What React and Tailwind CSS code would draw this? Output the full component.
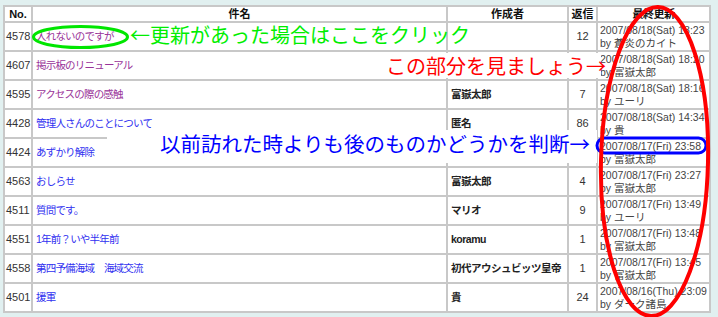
import React from "react";

const rows = [
  { no: "4578", title: "入れないのですが", v: true, author: "", reply: "12", date: "2007/08/18(Sat) 18:23", by: "蒼炎のカイト" },
  { no: "4607", title: "掲示板のリニューアル", v: true, author: "", reply: "", date: "2007/08/18(Sat) 18:20", by: "富嶽太郎" },
  { no: "4595", title: "アクセスの際の感触", v: true, author: "富嶽太郎", reply: "7", date: "2007/08/18(Sat) 18:16", by: "ユーリ" },
  { no: "4428", title: "管理人さんのことについて", v: false, author: "匿名", reply: "86", date: "2007/08/18(Sat) 14:34", by: "貴" },
  { no: "4424", title: "あずかり解除", v: false, author: "", reply: "", date: "2007/08/17(Fri) 23:58", by: "富嶽太郎" },
  { no: "4563", title: "おしらせ", v: false, author: "富嶽太郎", reply: "4", date: "2007/08/17(Fri) 23:27", by: "富嶽太郎" },
  { no: "4511", title: "質問です。", v: false, author: "マリオ", reply: "9", date: "2007/08/17(Fri) 13:49", by: "ユーリ" },
  { no: "4551", title: "1年前？いや半年前", v: false, author: "koramu", reply: "1", date: "2007/08/17(Fri) 13:48", by: "富嶽太郎" },
  { no: "4558", title: "第四予備海域　海域交流", v: false, author: "初代アウシュビッツ皇帝", reply: "1", date: "2007/08/17(Fri) 13:45", by: "富嶽太郎" },
  { no: "4501", title: "援軍", v: false, author: "貴", reply: "24", date: "2007/08/16(Thu) 23:09", by: "ダーク諸島" },
];

export default function App() {
  return (
    <div className="relative w-[718px] h-[317px] bg-[#e1f0f0] pt-[5px] pl-[3px] overflow-hidden font-['Liberation_Sans','Noto_Sans_CJK_JP',sans-serif]">
      <div className="grid w-fit grid-cols-[26px_413px_119px_27px_111px] grid-rows-[14px_repeat(10,27px)] gap-[2px] p-[2px] bg-[#c8c8c8] text-[11px]">
        <div className="bg-white flex items-center justify-center font-bold text-[#111] leading-none">No.</div>
        <div className="bg-white flex items-center justify-center font-bold text-[#111] leading-none">件名</div>
        <div className="bg-white flex items-center justify-center font-bold text-[#111] leading-none">作成者</div>
        <div className="bg-white flex items-center justify-center font-bold text-[#111] leading-none">返信</div>
        <div className="bg-white flex items-center justify-center font-bold text-[#111] leading-none tracking-[-0.5px]">最終更新</div>
        {rows.map((r) => (
          <React.Fragment key={r.no}>
            <div className="bg-white flex items-center pl-[1px] text-[#333]">{r.no}</div>
            <div className={`bg-white flex items-center pl-[3px] text-[10.5px] tracking-[-0.8px] whitespace-nowrap ${r.v ? "text-[#993399]" : "text-[#3030f0]"}`}>{r.title}</div>
            <div className="bg-white flex items-center pl-[3px] font-bold text-[#222] text-[10.5px] tracking-[-0.5px] whitespace-nowrap">{r.author}</div>
            <div className="bg-white flex items-center justify-center text-[#333]">{r.reply}</div>
            <div className="bg-white flex flex-col justify-center pl-[2px] text-[#444] text-[10.5px] leading-[13px] whitespace-nowrap">
              <span>{r.date}</span>
              <span>by {r.by}</span>
            </div>
          </React.Fragment>
        ))}
      </div>

      <div className="absolute left-[130px] top-[24px] text-[20px] leading-[22px] text-[#00ee00] font-['Noto_Sans_CJK_JP',sans-serif] whitespace-nowrap">
        ←更新があった場合はここをクリック
      </div>
      <div className="absolute left-[380px] top-[53px] w-[221px] h-[25px] bg-white pl-[6px] text-[20px] leading-[25px] text-[#ff0000] font-['Noto_Sans_CJK_JP',sans-serif] whitespace-nowrap">
        この部分を見ましょう→
      </div>
      <div className="absolute left-[107px] top-[130px] w-[490px] h-[33px] bg-white pl-[53px] pt-[1px] text-[20.5px] leading-[24px] text-[#0000ff] font-['Noto_Sans_CJK_JP',sans-serif] whitespace-nowrap">
        以前訪れた時よりも後のものかどうかを判断→
      </div>

      <svg className="absolute left-0 top-0 pointer-events-none" width="718" height="317" viewBox="0 0 718 317">
        <ellipse cx="80.5" cy="37" rx="47" ry="10.5" fill="none" stroke="#00e600" strokeWidth="3" />
        <rect x="597" y="138" width="109" height="15" rx="7.5" fill="none" stroke="#0000ff" strokeWidth="3" />
        <ellipse cx="654.5" cy="161.5" rx="53.5" ry="154.5" fill="none" stroke="#ff0000" strokeWidth="4" transform="rotate(1.3 654.5 161.5)" />
      </svg>
    </div>
  );
}
